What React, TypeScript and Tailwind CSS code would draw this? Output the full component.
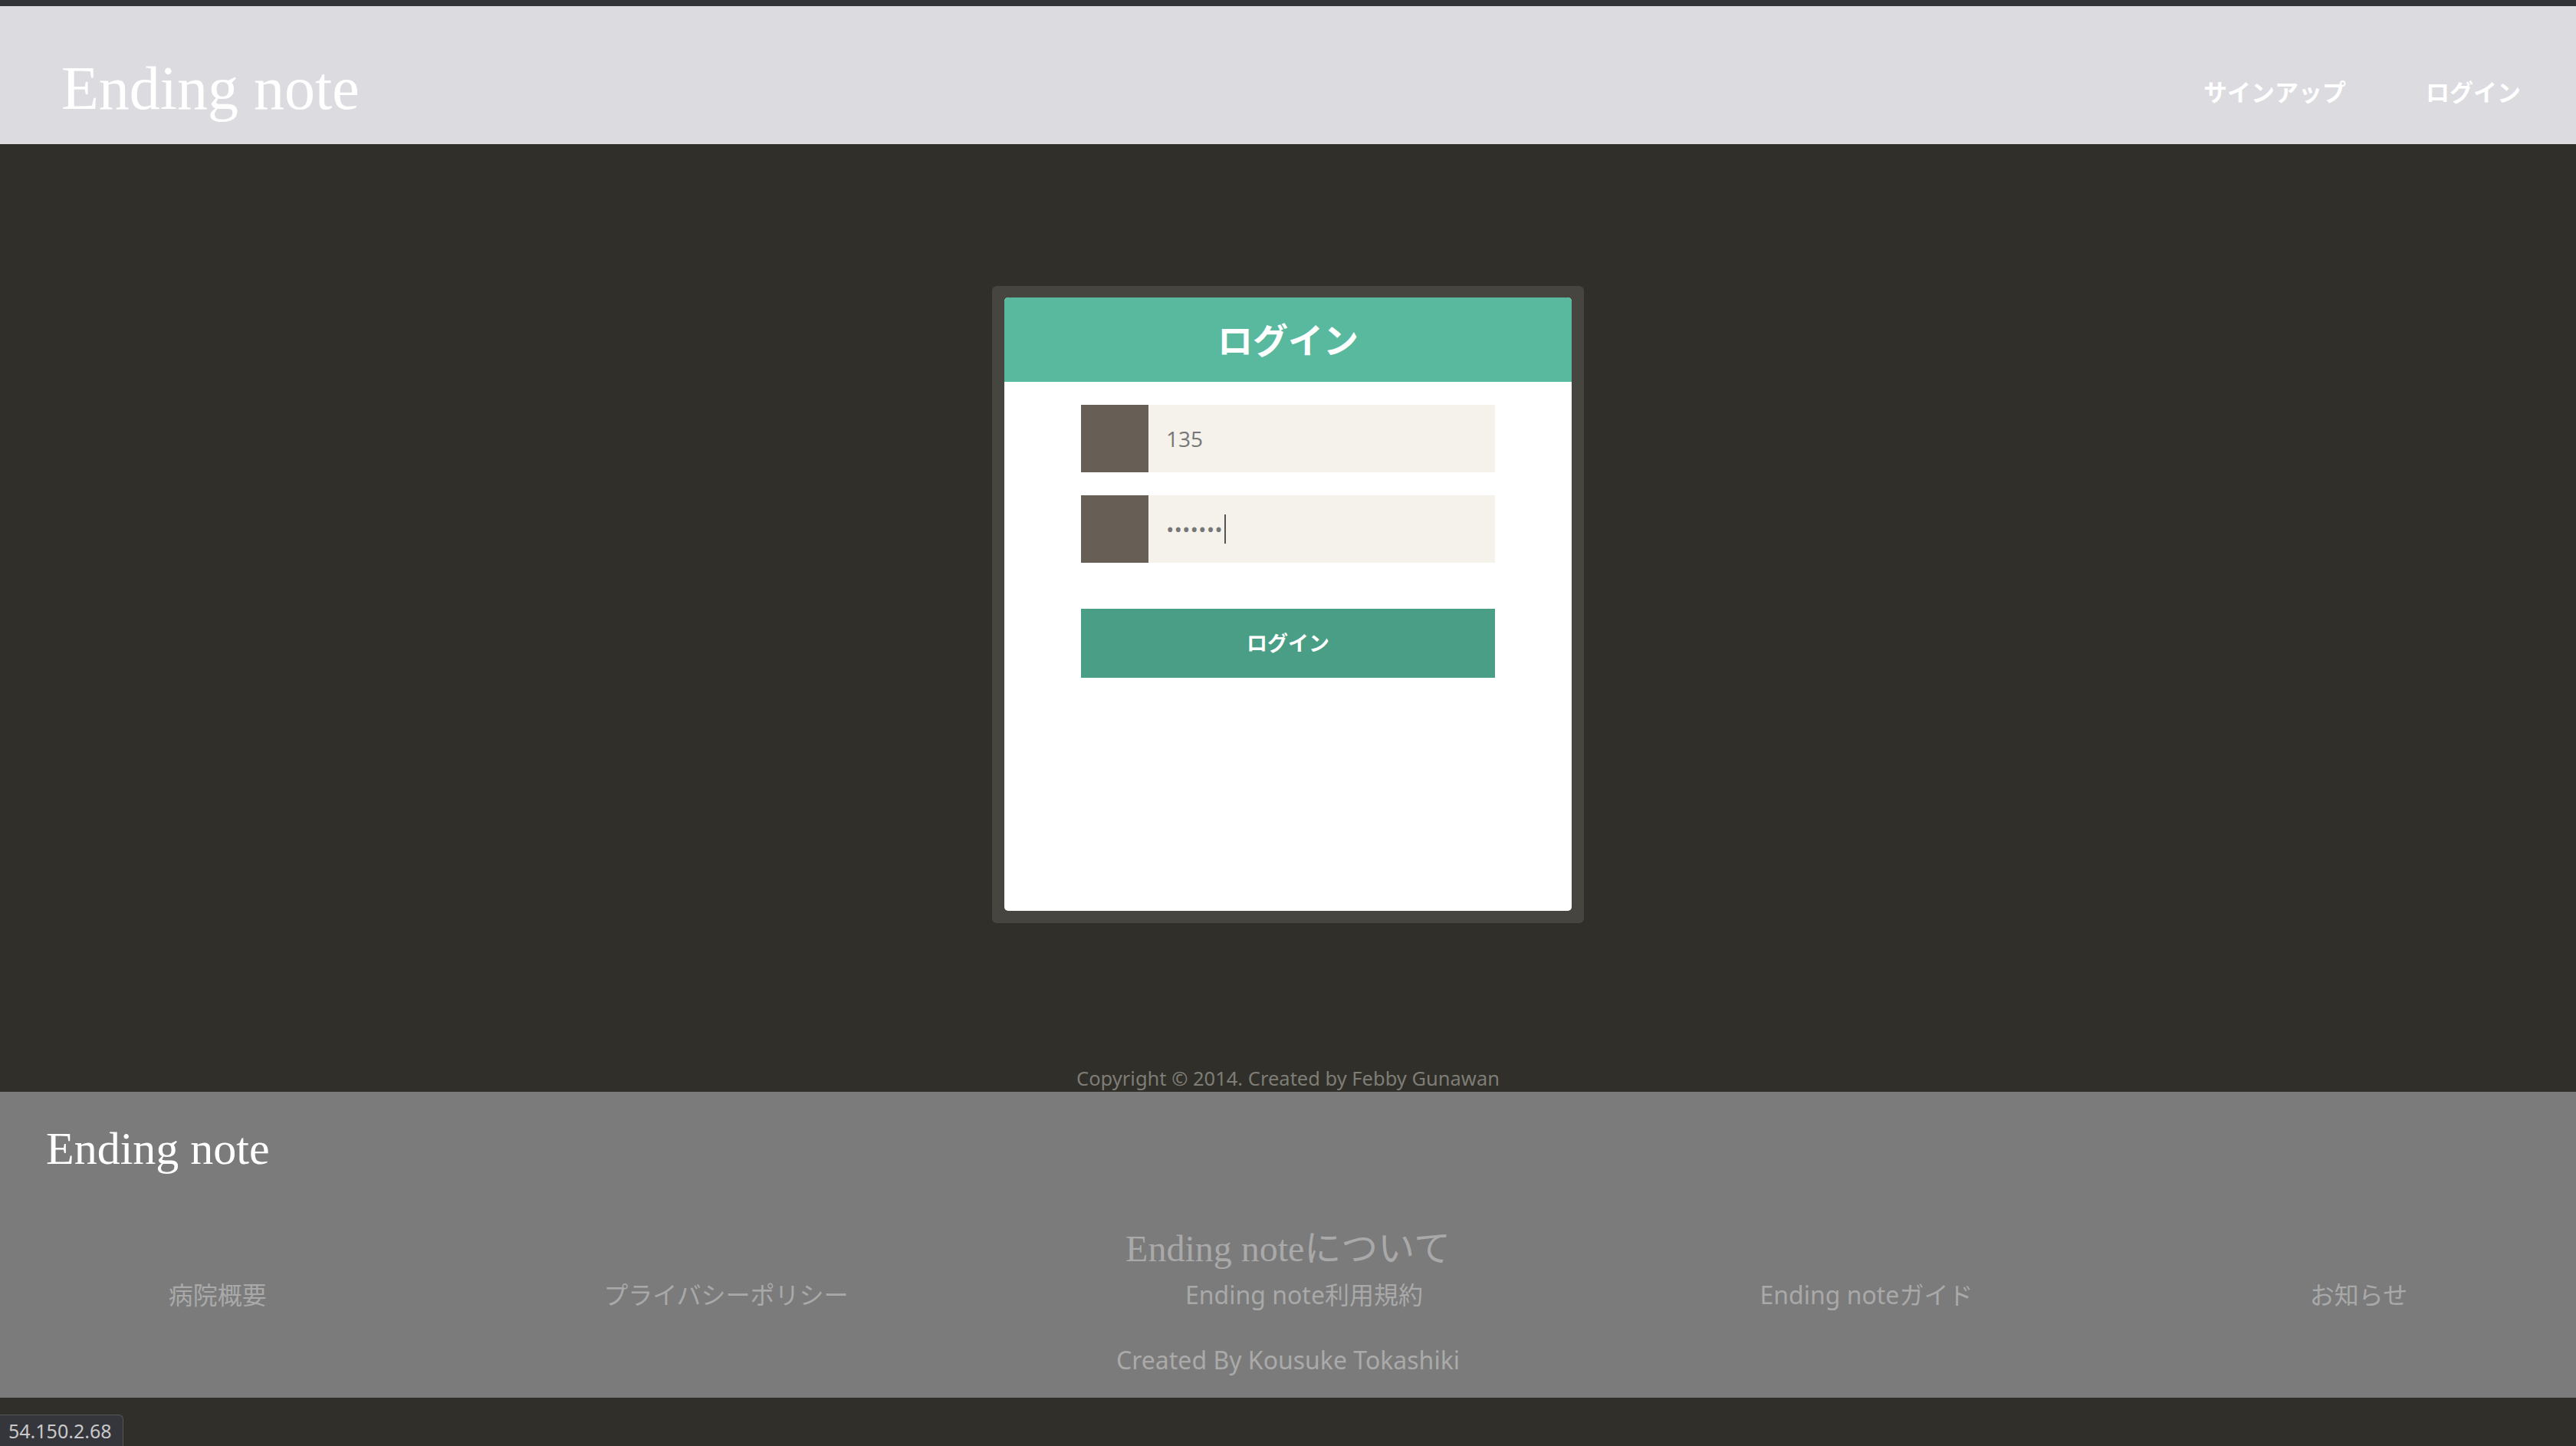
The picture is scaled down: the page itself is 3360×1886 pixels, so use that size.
import React from 'react';

const sans = 'font-["Noto_Sans","Noto_Sans_CJK_JP",sans-serif]';

const footerLinks = ['病院概要', 'プライバシーポリシー', 'Ending note利用規約', 'Ending noteガイド', 'お知らせ'];

function LoginCard() {
  return (
    <div className="w-[772px] bg-[#464540] rounded-[6px] pt-[15px] px-[16px] pb-[16px]">
      <div className="h-[800px] bg-white rounded-[5px] overflow-hidden flex flex-col">
        <div className="h-[110px] shrink-0 bg-[#58b99e] flex items-center justify-center">
          <h2 className={`${sans} text-[46px] leading-none font-bold text-white`}>ログイン</h2>
        </div>
        <div className="px-[100px] pt-[30px] flex flex-col">
          <div className="flex h-[88px]">
            <div className="w-[88px] shrink-0 bg-[#675f55]" />
            <div className="flex-1 bg-[#f5f2ec] flex items-center pl-[23px] font-['Open_Sans',sans-serif] text-[28px] text-[#777]">
              135
            </div>
          </div>
          <div className="flex h-[88px] mt-[30px]">
            <div className="w-[88px] shrink-0 bg-[#675f55]" />
            <div className="flex-1 bg-[#f5f2ec] flex items-center pl-[23px] font-['Open_Sans',sans-serif] text-[28px] text-[#777]">
              <span className="leading-none">•••••••</span>
              <span className="ml-[2px] w-[2px] h-[38px] bg-[#555]" />
            </div>
          </div>
          <button className={`mt-[60px] h-[90px] bg-[#4a9e85] text-white font-bold text-[27px] ${sans}`}>
            ログイン
          </button>
        </div>
      </div>
    </div>
  );
}

export default function App() {
  return (
    <div className="h-[1886px] bg-[#302f2a] flex flex-col relative overflow-hidden">
      <div className="h-[8px] shrink-0 bg-[#323337]" />
      <header className="h-[180px] shrink-0 bg-[#dcdbe0] flex justify-between pl-[80px] pr-[72px]">
        <h1 className="mt-[67px] font-['Liberation_Serif',serif] text-[80px] leading-[81px] text-white">Ending note</h1>
        <nav className={`mt-[97px] flex gap-[104px] ${sans} text-[31px] leading-[31px] font-bold text-white`}>
          <a>サインアップ</a>
          <a>ログイン</a>
        </nav>
      </header>

      <main className="h-[1236px] shrink-0 flex flex-col items-center pt-[185px]">
        <LoginCard />
        <p className={`mt-auto pb-[5px] ${sans} text-[25.5px] leading-[25px] text-[#7e7d76]`}>
          Copyright © 2014. Created by Febby Gunawan
        </p>
      </main>

      <footer className="h-[399px] shrink-0 bg-[#7b7b7b] flex flex-col">
        <p className="ml-[60px] mt-[44px] font-['Liberation_Serif',serif] text-[60px] leading-[60px] text-white">Ending note</p>
        <p className="mt-[77px] text-center font-['Liberation_Serif','Noto_Sans_CJK_JP',serif] text-[48px] leading-[48px] text-[#a9a9a9]">
          Ending noteについて
        </p>
        <ul className={`mt-[20px] flex justify-around ${sans} text-[32px] leading-[32px] text-[#a9a9a9]`}>
          {footerLinks.map((l) => (
            <li key={l}>{l}</li>
          ))}
        </ul>
        <p className={`mt-[53px] text-center ${sans} text-[32px] leading-[32px] text-[#aaa]`}>
          Created By Kousuke Tokashiki
        </p>
      </footer>

      <div className="flex-1" />

      <div className="absolute left-0 bottom-0 w-[161px] h-[41px] bg-[#35363b] border-t border-r border-[#55565a] rounded-tr-[6px] flex items-center pl-[11px]">
        <span className="font-['Noto_Sans',sans-serif] text-[25px] leading-none text-[#c9c9c9]">54.150.2.68</span>
      </div>
    </div>
  );
}
